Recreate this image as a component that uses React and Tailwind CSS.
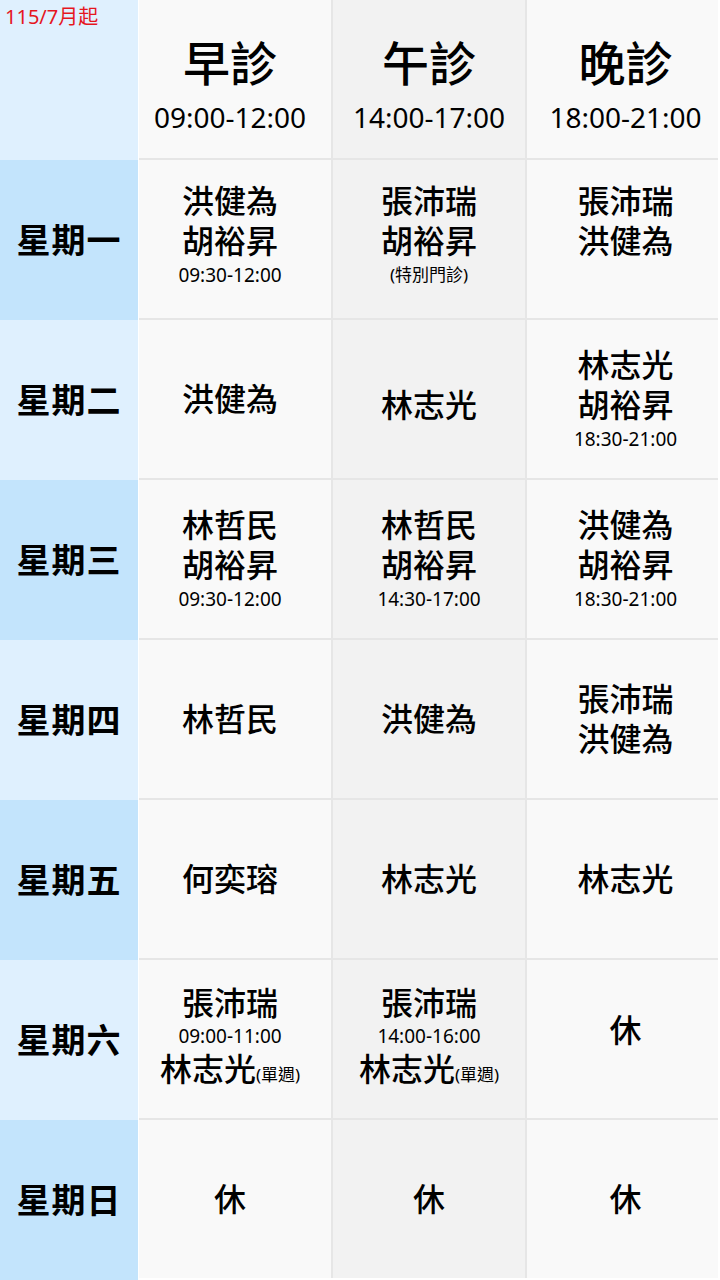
import React from 'react';

const font = { fontFamily: '"Noto Sans", "Noto Sans CJK TC", sans-serif' };

const days = ['星期一', '星期二', '星期三', '星期四', '星期五', '星期六', '星期日'];

const Name = ({ children, extra }) => (
  <div className="text-[32px] leading-[40px] font-medium text-black">
    {children}
    {extra && <span className="text-[17px] font-normal">{extra}</span>}
  </div>
);

const Time = ({ children }) => (
  <div className="text-[19px] leading-[28px] text-black">{children}</div>
);

// col: 1 = morning, 2 = afternoon (darker), 3 = evening
const Cell = ({ col = 1, className = '', children }) => (
  <div
    className={`flex flex-col items-center justify-center text-center ${
      col === 2 ? 'bg-[#f2f2f2]' : 'bg-[#f9f9f9]'
    } ${col === 1 ? 'pr-[10px]' : ''} ${col === 3 ? 'pl-[6px]' : ''} ${className}`}
  >
    {children}
  </div>
);

const Header = ({ col, title, time }) => (
  <Cell col={col}>
    <div className="text-[47px] leading-[56px] font-medium pt-[14px]">{title}</div>
    <div className="text-[28px] leading-[40px] mt-[6px]">{time}</div>
  </Cell>
);

const App = () => {
  return (
    <div className="w-[720px] h-[1280px] flex bg-[#ffffff] overflow-hidden" style={font}>
      {/* Day column */}
      <div className="w-[138px] flex flex-col">
        <div className="h-[160px] bg-[#dff0fe] px-[5px]">
          <span className="text-[20px] leading-[34px] text-[#e5161e]">115/7月起</span>
        </div>
        {days.map((d, i) => (
          <div
            key={d}
            className={`h-[160px] flex items-center justify-center text-[34px] font-bold text-black tracking-[1px] ${
              i % 2 === 0 ? 'bg-[#c3e4fc]' : 'bg-[#dff0fe]'
            }`}
          >
            {d}
          </div>
        ))}
      </div>

      {/* Schedule grid */}
      <div className="ml-[1px] grid grid-cols-[192px_192px_191px] grid-rows-[repeat(8,158px)] gap-[2px] bg-[#e6e6e6] h-[1278px]">
        <Header col={1} title="早診" time="09:00-12:00" />
        <Header col={2} title="午診" time="14:00-17:00" />
        <Header col={3} title="晚診" time="18:00-21:00" />

        {/* 星期一 */}
        <Cell col={1} className="pb-[8px]">
          <Name>洪健為</Name>
          <Name>胡裕昇</Name>
          <Time>09:30-12:00</Time>
        </Cell>
        <Cell col={2} className="pb-[8px]">
          <Name>張沛瑞</Name>
          <Name>胡裕昇</Name>
          <div className="text-[17px] leading-[28px]">(特別門診)</div>
        </Cell>
        <Cell col={3} className="pb-[36px]">
          <Name>張沛瑞</Name>
          <Name>洪健為</Name>
        </Cell>

        {/* 星期二 */}
        <Cell col={1}>
          <Name>洪健為</Name>
        </Cell>
        <Cell col={2} className="pt-[12px]">
          <Name>林志光</Name>
        </Cell>
        <Cell col={3}>
          <Name>林志光</Name>
          <Name>胡裕昇</Name>
          <Time>18:30-21:00</Time>
        </Cell>

        {/* 星期三 */}
        <Cell col={1}>
          <Name>林哲民</Name>
          <Name>胡裕昇</Name>
          <Time>09:30-12:00</Time>
        </Cell>
        <Cell col={2}>
          <Name>林哲民</Name>
          <Name>胡裕昇</Name>
          <Time>14:30-17:00</Time>
        </Cell>
        <Cell col={3}>
          <Name>洪健為</Name>
          <Name>胡裕昇</Name>
          <Time>18:30-21:00</Time>
        </Cell>

        {/* 星期四 */}
        <Cell col={1}>
          <Name>林哲民</Name>
        </Cell>
        <Cell col={2}>
          <Name>洪健為</Name>
        </Cell>
        <Cell col={3}>
          <Name>張沛瑞</Name>
          <Name>洪健為</Name>
        </Cell>

        {/* 星期五 */}
        <Cell col={1}>
          <Name>何奕瑢</Name>
        </Cell>
        <Cell col={2}>
          <Name>林志光</Name>
        </Cell>
        <Cell col={3}>
          <Name>林志光</Name>
        </Cell>

        {/* 星期六 */}
        <Cell col={1}>
          <Name>張沛瑞</Name>
          <div className="text-[19px] leading-[26px]">09:00-11:00</div>
          <Name extra="(單週)">林志光</Name>
        </Cell>
        <Cell col={2}>
          <Name>張沛瑞</Name>
          <div className="text-[19px] leading-[26px]">14:00-16:00</div>
          <Name extra="(單週)">林志光</Name>
        </Cell>
        <Cell col={3} className="pb-[18px]">
          <Name>休</Name>
        </Cell>

        {/* 星期日 */}
        <Cell col={1}>
          <Name>休</Name>
        </Cell>
        <Cell col={2}>
          <Name>休</Name>
        </Cell>
        <Cell col={3}>
          <Name>休</Name>
        </Cell>
      </div>
    </div>
  );
};

export default App;
